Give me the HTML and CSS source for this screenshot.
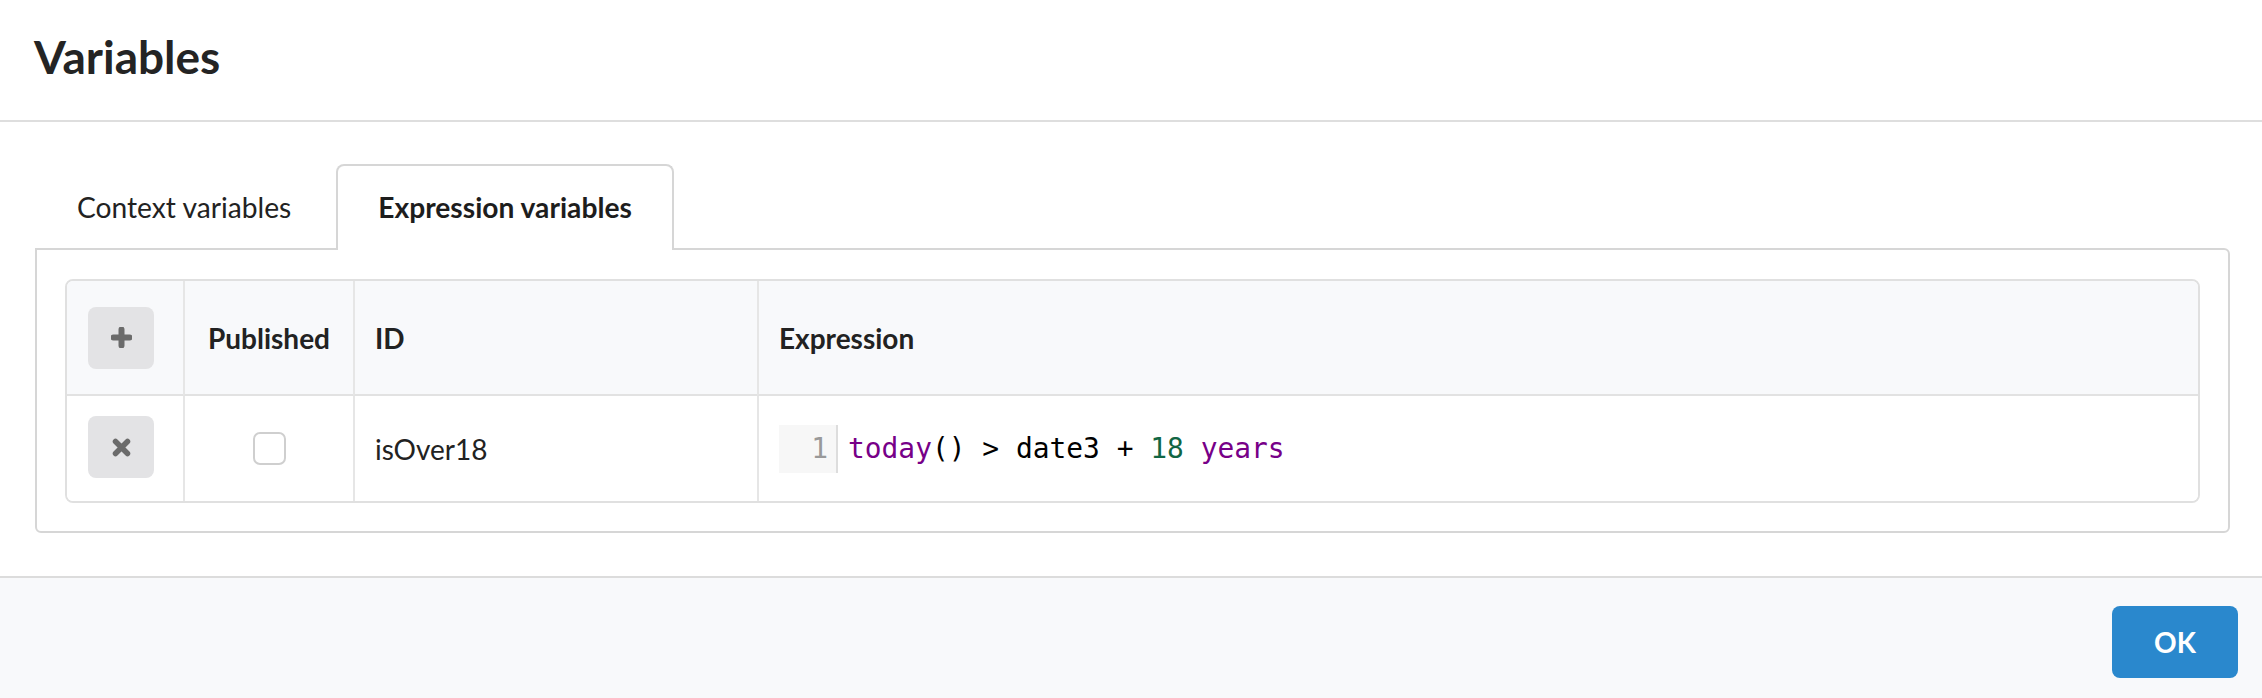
FILE: index.html
```html
<!DOCTYPE html>
<html lang="en">
<head>
<meta charset="utf-8">
<title>Variables</title>
<link rel="stylesheet" href="styles.css">
</head>
<body>
<div class="dialog">
  <header class="dlg-header">
    <h1 class="dlg-title">Variables</h1>
  </header>
  <main class="dlg-body">
    <div class="tabs">
      <div class="tab">Context variables</div>
      <div class="tab tab-active">Expression variables</div>
    </div>
    <section class="panel">
      <div class="vtable">
        <div class="cell head c-btn">
          <button class="icon-btn" type="button" aria-label="Add">
            <svg width="21" height="21" viewBox="0 0 21 21"><path d="M10.5 2.5v16M2.5 10.5h16" stroke="#6b6b6b" stroke-width="6" stroke-linecap="round"/></svg>
          </button>
        </div>
        <div class="cell head c-pub">Published</div>
        <div class="cell head">ID</div>
        <div class="cell head">Expression</div>

        <div class="cell row c-btn">
          <button class="icon-btn" type="button" aria-label="Remove">
            <svg width="19" height="19" viewBox="0 0 19 19"><path d="M3.5 3.5l12 12M15.5 3.5l-12 12" stroke="#6b6b6b" stroke-width="5.5" stroke-linecap="round"/></svg>
          </button>
        </div>
        <div class="cell row c-pub"><span class="checkbox"></span></div>
        <div class="cell row">isOver18</div>
        <div class="cell row">
          <div class="cm">
            <div class="cm-gutter">1</div>
            <div class="cm-line"><span class="kw">today</span>() &gt; date3 + <span class="num">18</span> <span class="kw">years</span></div>
          </div>
        </div>
      </div>
    </section>
  </main>
  <footer class="dlg-footer">
    <button class="ok-btn" type="button">OK</button>
  </footer>
</div>
</body>
</html>
```

FILE: styles.css
```css
* { box-sizing: border-box; }

html, body {
  margin: 0;
  padding: 0;
  background: #ffffff;
}

body {
  font-family: Lato, "Open Sans", "Liberation Sans", sans-serif;
  color: #222222;
}

.dialog {
  display: flex;
  flex-direction: column;
  min-height: 698px;
}

.dlg-header {
  height: 122px;
  padding: 29px 34px 0;
  border-bottom: 2px solid #dedede;
}

.dlg-title {
  margin: 0;
  font-size: 46px;
  font-weight: 700;
  line-height: normal;
  color: #242424;
}

.dlg-body {
  padding: 42px 32px 43px 35px;
}

.tabs {
  display: flex;
  gap: 3px;
  margin-bottom: -2px;
}

.tab {
  padding: 24px 40px 26px;
  border: 2px solid transparent;
  border-bottom: 0;
  font-size: 28.2px;
  line-height: normal;
  color: #222222;
}

.tab-active {
  position: relative;
  z-index: 1;
  background: #ffffff;
  border-color: #d6d6d6;
  border-radius: 8px 8px 0 0;
  font-weight: 700;
  color: #1d1d1d;
}

.panel {
  border: 2px solid #d6d6d6;
  border-radius: 0 6px 6px 6px;
  padding: 29px 28px 28px;
}

.vtable {
  display: grid;
  grid-template-columns: 116px 170px 404px 1fr;
  border: 2px solid #e0e0e0;
  border-radius: 8px;
  overflow: hidden;
}

.cell {
  display: flex;
  align-items: center;
  padding: 0 20px;
  font-size: 28px;
  border-left: 2px solid #e6e6e6;
}

.cell.c-btn {
  border-left: 0;
  padding: 0 0 0 21px;
}

.cell.head {
  height: 115px;
  background: #f8f9fb;
  border-bottom: 2px solid #e2e2e2;
  font-weight: 700;
  color: #222222;
}

.cell.row {
  height: 105px;
  background: #ffffff;
}

.cell.c-pub {
  justify-content: center;
  padding: 0;
}

.icon-btn {
  display: flex;
  align-items: center;
  justify-content: center;
  width: 66px;
  height: 62px;
  margin: 0;
  padding: 0;
  border: 0;
  border-radius: 8px;
  background: #e3e3e5;
}

.cell.row .icon-btn {
  margin-top: -3px;
}

.checkbox {
  display: block;
  width: 33px;
  height: 33px;
  border: 2px solid #cfcfcf;
  border-radius: 7px;
  background: #ffffff;
}

.cm {
  display: flex;
  height: 48px;
  font-family: "DejaVu Sans Mono", "Liberation Mono", monospace;
  font-size: 27.9px;
  line-height: 48px;
  color: #000000;
}

.cm-gutter {
  width: 59px;
  padding-right: 8px;
  text-align: right;
  background: #f7f7f7;
  border-right: 2px solid #dddddd;
  color: #999999;
}

.cm-line {
  padding-left: 10px;
  white-space: pre;
}

.kw { color: #770088; }
.num { color: #116644; }

.dlg-footer {
  flex: 1;
  display: flex;
  justify-content: flex-end;
  align-items: flex-start;
  padding: 28px 24px 20px;
  background: #f8f9fb;
  border-top: 2px solid #dcdcdc;
}

.ok-btn {
  width: 126px;
  height: 72px;
  margin: 0;
  border: 0;
  border-radius: 8px;
  background: #2a88cd;
  color: #ffffff;
  font-family: Lato, "Open Sans", sans-serif;
  font-weight: 700;
  font-size: 28px;
}
```
